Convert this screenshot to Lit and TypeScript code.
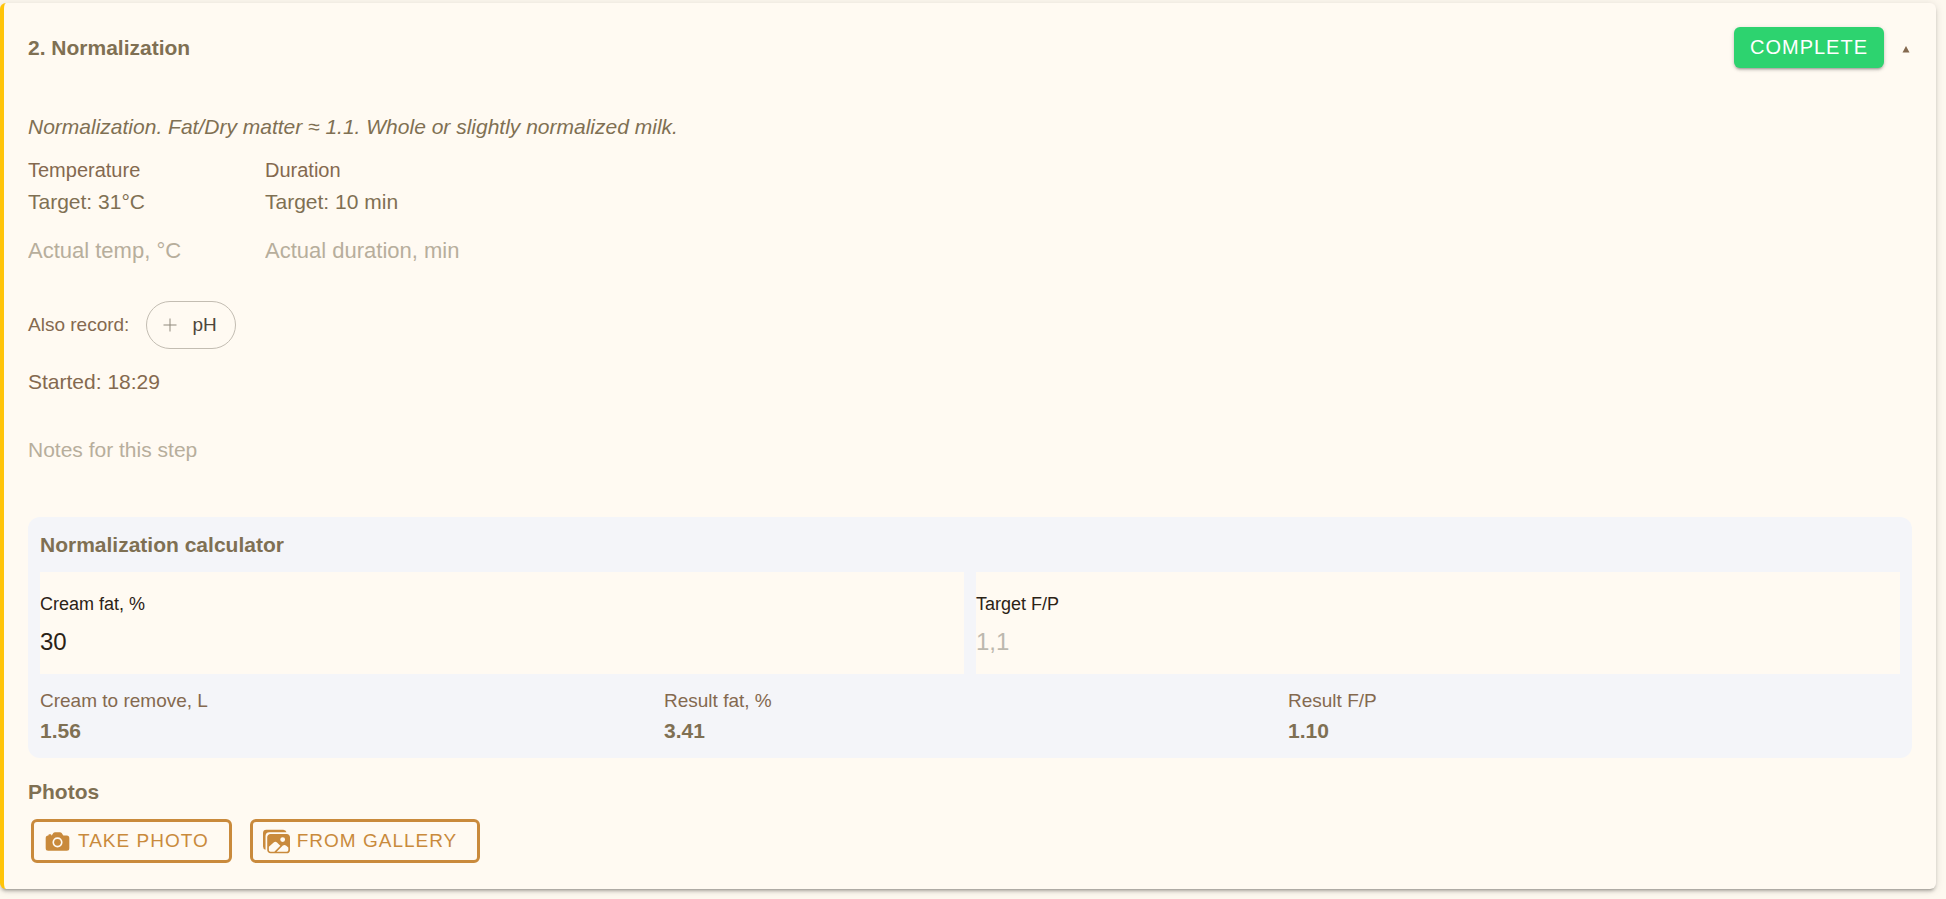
import { LitElement, html, css, svg } from "lit";
import { customElement, property, state } from "lit/decorators.js";

const cameraIcon = svg`
  <circle cx="256" cy="272" r="64"></circle>
  <path d="M432 144h-59c-3 0-6.72-1.94-9.62-5l-25.94-40.94a15.52 15.52 0 00-1.37-1.85C327.11 85.76 315 80 302 80h-92c-13 0-25.11 5.76-34.07 16.21a15.52 15.52 0 00-1.37 1.85l-25.94 41c-2.22 2.42-5.34 5-8.62 5v-8a16 16 0 00-16-16h-24a16 16 0 00-16 16v8h-4a48.05 48.05 0 00-48 48V384a48.05 48.05 0 0048 48h352a48.05 48.05 0 0048-48V192a48.05 48.05 0 00-48-48zM256 368a96 96 0 1196-96 96.11 96.11 0 01-96 96z"></path>`;

const imagesIcon = svg`
  <path d="M450.29 112H142c-34 0-62 27.51-62 61.33v245.34c0 33.82 28 61.33 62 61.33h308c34 0 62-26.18 62-60V173.33c0-33.82-27.68-61.33-61.71-61.33zm-77.15 61.34a46 46 0 11-46.28 46 46.19 46.19 0 0146.28-46zm-231.55 276c-17 0-29.86-13.75-29.86-30.66v-64.83l90.46-80.79a46.54 46.54 0 0163.44 1.83L328.27 337l-113 112.33zM480 418.67a30.67 30.67 0 01-30.71 30.66H259L376.08 333a46.24 46.24 0 0159.44-.16L480 370.59z"></path>
  <path d="M384 32H64A64 64 0 000 96v256a64.11 64.11 0 0048 62V152a72 72 0 0172-72h326a64.11 64.11 0 00-62-48z"></path>`;

@customElement("norm-calculator")
class NormCalculator extends LitElement {
  @property({ attribute: false }) results: { label: string; value: string }[] = [];

  static styles = css`
    :host {
      display: block;
      padding: 12px;
      border-radius: 12px;
      background: #f4f5f9;
    }
    .title {
      margin: 0 0 11px;
      font-size: 21px;
      line-height: 32px;
      font-weight: 700;
    }
    .fields {
      display: grid;
      grid-template-columns: 1fr 1fr;
      gap: 12px;
    }
    .field {
      display: flex;
      flex-direction: column;
      gap: 10px;
      padding: 20px 0 16px;
      background: #fffaf2;
      color: #2b2216;
      font-size: 18px;
      line-height: 24px;
    }
    .input {
      width: 100%;
      height: 32px;
      padding: 0;
      border: 0;
      outline: 0;
      background: none;
      color: inherit;
      font-family: inherit;
      font-size: 24px;
    }
    .input::placeholder {
      color: #bcb8ae;
      opacity: 1;
    }
    .results {
      display: grid;
      grid-template-columns: repeat(3, 1fr);
      gap: 12px;
      margin: 12px 0 0;
      line-height: 30px;
    }
    .name {
      color: #84694f;
      font-size: 19px;
    }
    .value {
      margin: 0;
      font-size: 21px;
      font-weight: 700;
    }
  `;

  render() {
    return html`
      <h3 class="title">Normalization calculator</h3>
      <div class="fields">
        <label class="field">Cream fat, %<input class="input" inputmode="decimal" value="30" /></label>
        <label class="field">Target F/P<input class="input" inputmode="decimal" placeholder="1,1" /></label>
      </div>
      <dl class="results">
        ${this.results.map(
          (r) => html`<div><dt class="name">${r.label}</dt><dd class="value">${r.value}</dd></div>`
        )}
      </dl>
    `;
  }
}

@customElement("app-root")
class AppRoot extends LitElement {
  @state() private results = [
    { label: "Cream to remove, L", value: "1.56" },
    { label: "Result fat, %", value: "3.41" },
    { label: "Result F/P", value: "1.10" },
  ];

  @state() private readings = [
    { id: "temp", label: "Temperature", target: "Target: 31°C", hint: "Actual temp, °C" },
    { id: "time", label: "Duration", target: "Target: 10 min", hint: "Actual duration, min" },
  ];

  static styles = css`
    :host {
      display: block;
      box-sizing: border-box;
      min-height: 100vh;
      padding: 3px 10px 10px 0;
      background: #fdf8ef;
      color: #7f7053;
      font-family: "Helvetica Neue", "Liberation Sans", Arial, sans-serif;
      font-size: 21px;
      line-height: 32px;
    }
    .card {
      padding: 24px 24px 26px;
      border-left: 4px solid #ffc409;
      border-radius: 6px;
      background: #fffaf2;
      box-shadow: 0 4px 2px -3px rgba(0, 0, 0, 0.2), 0 3px 3px 0 rgba(0, 0, 0, 0.14),
        0 1px 8px 0 rgba(0, 0, 0, 0.12);
    }
    .head {
      display: flex;
      align-items: center;
      justify-content: space-between;
    }
    .heading {
      margin: 0;
      font-size: 21px;
      font-weight: 700;
    }
    .actions,
    .photos,
    .record {
      display: flex;
      align-items: center;
    }
    button {
      display: flex;
      align-items: center;
      border: 0;
      background: none;
      font-family: inherit;
      cursor: pointer;
    }
    .complete {
      height: 41px;
      padding: 0 16px;
      border-radius: 6px;
      background: #2dd36f;
      color: #fff;
      font-size: 20px;
      font-weight: 500;
      letter-spacing: 1px;
      box-shadow: 0 3px 2px -2px rgba(0, 0, 0, 0.2), 0 2px 3px 0 rgba(0, 0, 0, 0.14),
        0 1px 5px 0 rgba(0, 0, 0, 0.12);
    }
    .toggle {
      padding: 18px 2px 15px 18px;
    }
    .triangle {
      width: 8px;
      height: 8px;
      fill: #84694f;
    }
    .about {
      margin: 43px 0 11px;
      font-style: italic;
    }
    .readings {
      display: grid;
      grid-template-columns: 225px 225px;
      gap: 12px;
    }
    .label,
    .started,
    .record {
      color: #84694f;
    }
    .label {
      display: block;
      font-size: 20px;
    }
    .target {
      margin: 0 0 17px;
    }
    .actual,
    .notes {
      display: block;
      box-sizing: border-box;
      width: 100%;
      height: 32px;
      padding: 0;
      border: 0;
      outline: 0;
      background: none;
      color: #2b2216;
      font-family: inherit;
      font-size: 22px;
      line-height: 32px;
    }
    .notes {
      height: 51px;
      margin-bottom: 32px;
      resize: none;
      font-size: 21px;
    }
    .actual::placeholder,
    .notes::placeholder {
      color: #b7ae9c;
      opacity: 1;
    }
    .record {
      gap: 17px;
      margin-top: 34px;
      font-size: 19px;
    }
    .chip {
      height: 48px;
      gap: 15px;
      padding: 0 18px 0 16px;
      border: 1px solid #c3bdb2;
      border-radius: 24px;
      color: #4d463b;
      font-size: 19px;
    }
    .plus {
      width: 14px;
      height: 14px;
      stroke: #8f897d;
      fill: none;
    }
    .started {
      margin: 17px 0 36px;
    }
    .subhead {
      margin: 18px 0 11px;
      font-size: 21px;
      font-weight: 700;
    }
    .photos {
      gap: 18px;
      padding-left: 3px;
    }
    .outline {
      height: 44px;
      gap: 7px;
      padding: 0 20px 0 10px;
      border: 3px solid #c98a3c;
      border-radius: 6px;
      color: #c98a3c;
      font-size: 19px;
      font-weight: 500;
      letter-spacing: 1px;
    }
    .icon {
      width: 27px;
      height: 27px;
      fill: currentColor;
    }
  `;

  render() {
    return html`
      <section class="card">
        <header class="head">
          <h2 class="heading">2. Normalization</h2>
          <div class="actions">
            <button class="complete" type="button">COMPLETE</button>
            <button class="toggle" type="button" aria-label="Collapse step">
              <svg class="triangle" viewBox="0 0 8 8"><path d="M4 1L7.5 7.5H0.5z"></path></svg>
            </button>
          </div>
        </header>
        <p class="about">Normalization. Fat/Dry matter ≈ 1.1. Whole or slightly normalized milk.</p>
        <div class="readings">
          ${this.readings.map(
            (r) => html`
              <div>
                <label class="label" for=${r.id}>${r.label}</label>
                <p class="target">${r.target}</p>
                <input class="actual" id=${r.id} inputmode="decimal" placeholder=${r.hint} />
              </div>
            `
          )}
        </div>
        <div class="record">
          <span>Also record:</span>
          <button class="chip" type="button">
            <svg class="plus" viewBox="0 0 14 14"><path d="M7 0.5V13.5M0.5 7H13.5"></path></svg>
            pH
          </button>
        </div>
        <p class="started">Started: 18:29</p>
        <textarea class="notes" aria-label="Notes" placeholder="Notes for this step"></textarea>
        <norm-calculator .results=${this.results}></norm-calculator>
        <h3 class="subhead">Photos</h3>
        <div class="photos">
          <button class="outline" type="button">
            <svg class="icon" viewBox="0 0 512 512">${cameraIcon}</svg>
            TAKE PHOTO
          </button>
          <button class="outline" type="button">
            <svg class="icon" viewBox="0 0 512 512">${imagesIcon}</svg>
            FROM GALLERY
          </button>
        </div>
      </section>
    `;
  }
}
